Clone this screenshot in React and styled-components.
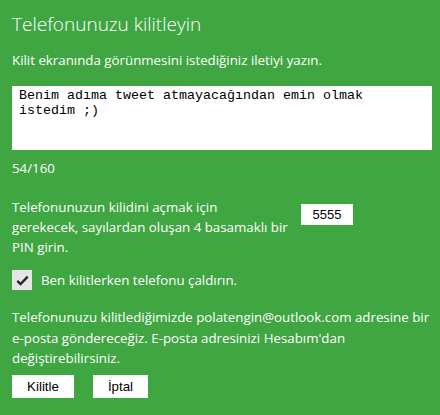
import React from "react";
import styled, { createGlobalStyle } from "styled-components";

const Global = createGlobalStyle`
  html, body {
    margin: 0;
    padding: 0;
    background: #40a642;
  }
`;

function App() {
  return (
    <Panel>
      <Global />
      <Title>Telefonunuzu kilitleyin</Title>
      <Text>Kilit ekranında görünmesini istediğiniz iletiyi yazın.</Text>
      <MessageBox>
        Benim adıma tweet atmayacağından emin olmak istedim ;)
      </MessageBox>
      <Counter>54/160</Counter>
      <PinRow>
        <PinText>
          Telefonunuzun kilidini açmak için
          <br />
          gerekecek, sayılardan oluşan 4 basamaklı bir
          <br />
          PIN girin.
        </PinText>
        <PinBox>5555</PinBox>
      </PinRow>
      <CheckRow>
        <CheckBox>
          <svg width="13" height="11" viewBox="0 0 13 11">
            <path
              d="M1.3 5.8 L4.6 9 L11.7 1.6"
              fill="none"
              stroke="#2a2a2a"
              strokeWidth="2.4"
            />
          </svg>
        </CheckBox>
        <span>Ben kilitlerken telefonu çaldırın.</span>
      </CheckRow>
      <Note>
        Telefonunuzu kilitlediğimizde polatengin@outlook.com adresine bir
        e-posta göndereceğiz. E-posta adresinizi Hesabım'dan
        değiştirebilirsiniz.
      </Note>
      <Buttons>
        <Button $w={62}>Kilitle</Button>
        <Button $w={55}>İptal</Button>
      </Buttons>
    </Panel>
  );
}

export default App;

const Panel = styled.div`
  width: 440px;
  height: 415px;
  box-sizing: border-box;
  background: #40a642;
  color: #fff;
  padding: 12px 8px 0 12px;
  font-family: "Open Sans", "Noto Sans", sans-serif;
  font-size: 13.3px;
  overflow: hidden;
`;

const Title = styled.h1`
  margin: 0;
  font-size: 19px;
  font-weight: 300;
  line-height: 24px;
`;

const Text = styled.p`
  margin: 15px 0 0;
  line-height: 18px;
`;

const MessageBox = styled.div`
  margin-top: 17px;
  width: 420px;
  height: 64px;
  box-sizing: border-box;
  background: #fff;
  color: #000;
  padding: 2px 60px 0 7px;
  font-family: "Liberation Mono", monospace;
  font-size: 13.33px;
  line-height: 15px;
`;

const Counter = styled.div`
  margin-top: 9px;
  line-height: 18px;
`;

const PinRow = styled.div`
  margin-top: 20px;
  display: flex;
  align-items: flex-start;
  gap: 16px;
`;

const PinText = styled.p`
  margin: 0;
  width: 273px;
  flex: none;
  white-space: nowrap;
  line-height: 20px;
`;

const PinBox = styled.div`
  margin-top: 7px;
  width: 52px;
  height: 21px;
  background: #fff;
  color: #000;
  font-family: "Liberation Sans", Arial, sans-serif;
  font-size: 13px;
  line-height: 21px;
  text-align: center;
`;

const CheckRow = styled.label`
  margin-top: 13px;
  display: flex;
  align-items: center;
  gap: 9px;
`;

const CheckBox = styled.span`
  width: 20px;
  height: 20px;
  background: #e6e6e6;
  display: flex;
  align-items: center;
  justify-content: center;
`;

const Note = styled.p`
  margin: 17px 0 0;
  line-height: 20.5px;
`;

const Buttons = styled.div`
  margin-top: 6px;
  display: flex;
  gap: 19px;
`;

const Button = styled.button`
  width: ${(p) => p.$w}px;
  height: 23px;
  border: none;
  padding: 0;
  background: #fff;
  color: #000;
  font-family: "Liberation Sans", Arial, sans-serif;
  font-size: 13.3px;
`;
